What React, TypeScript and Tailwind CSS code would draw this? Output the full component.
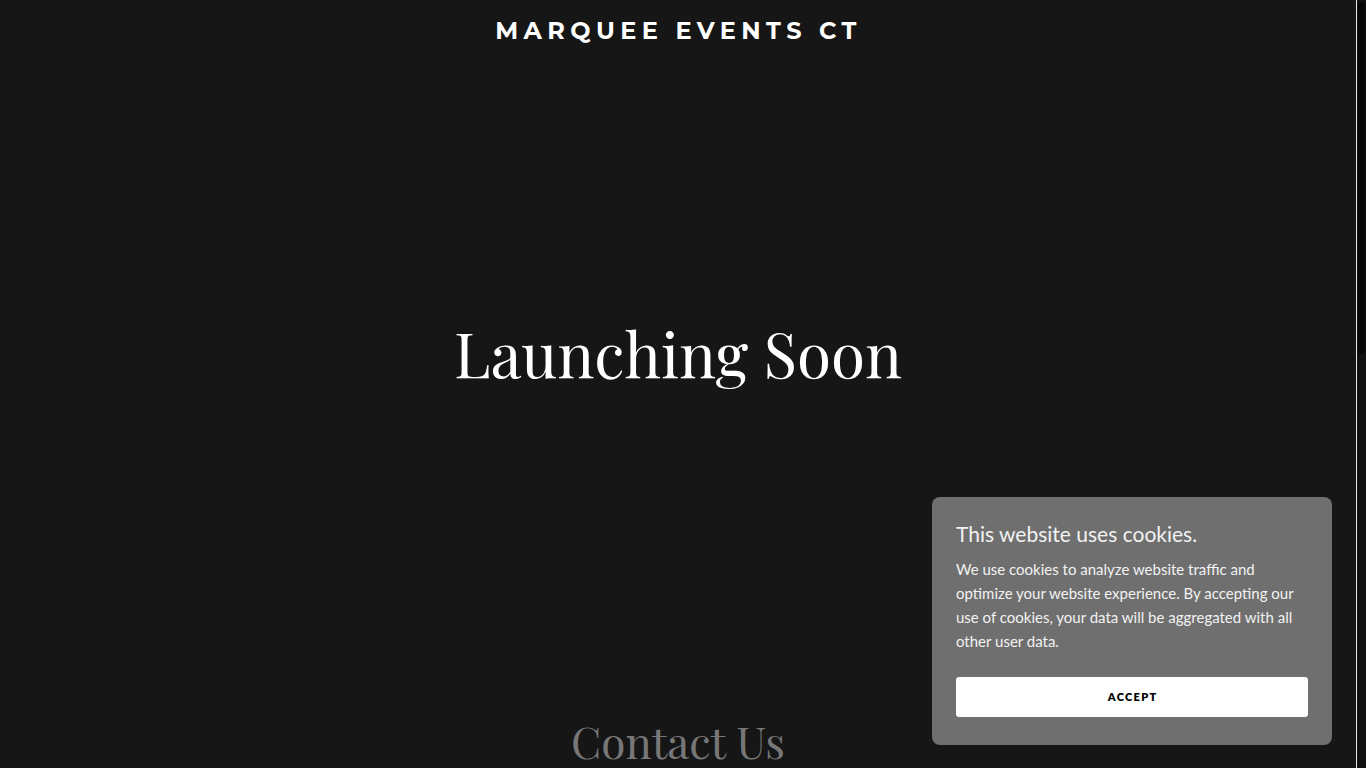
import React from "react";

export default function App() {
  return (
    <div className="flex h-screen w-full overflow-hidden bg-[#161616]">
      <main className="relative flex-1 overflow-hidden">
        <header className="flex h-[62px] items-center justify-center pl-[1px]">
          <h1 className="font-['Montserrat','Inter','Noto_Sans',sans-serif] text-[24px] font-bold tracking-[0.225em] text-white">
            MARQUEE EVENTS CT
          </h1>
        </header>

        <section className="flex h-[590px] items-center justify-center pb-[8px]">
          <h2 className="font-['Playfair_Display','DejaVu_Serif',serif] text-[62px] font-normal leading-none text-white">
            Launching Soon
          </h2>
        </section>

        <section className="flex flex-col items-center pt-[67px] pb-[800px]">
          <h2 className="font-['Playfair_Display','DejaVu_Serif',serif] text-[44px] font-normal leading-none text-[#777777]">
            Contact Us
          </h2>
        </section>

        <div className="absolute bottom-[23px] right-[24px] w-[400px] rounded-[8px] bg-[#6f6f6f] px-6 pt-[22px] pb-[28px] font-['Source_Sans_Pro','Lato',sans-serif] text-[#f2f2f2]">
          <p className="text-[21px] leading-[30px]">This website uses cookies.</p>
          <p className="mt-[8px] text-[15px] leading-[24px]">
            We use cookies to analyze website traffic and optimize your website experience. By accepting our use of cookies, your data will be aggregated with all other user data.
          </p>
          <button className="mt-[24px] flex h-[40px] w-full items-center justify-center rounded-[3px] bg-white pl-[0.12em] text-[11px] font-extrabold tracking-[0.12em] text-black">
            ACCEPT
          </button>
        </div>
      </main>

      <div className="flex w-[10px] flex-col border-l border-[#e8e8e8] bg-[#111111] pt-[2px]">
        <div className="mx-auto h-[352px] w-[7px] rounded-[3px] bg-[#070707]" />
      </div>
    </div>
  );
}
